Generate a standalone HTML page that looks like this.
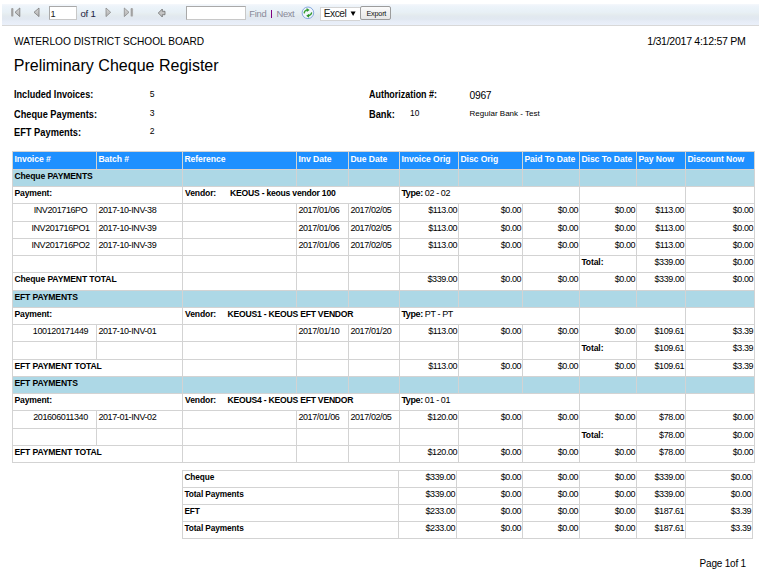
<!DOCTYPE html>
<html><head><meta charset="utf-8">
<style>
html,body{margin:0;padding:0;background:#fff;}
body{width:759px;height:572px;overflow:hidden;position:relative;font-family:"Liberation Sans",sans-serif;color:#000;}
.a{position:absolute;white-space:nowrap;}
.c{position:absolute;box-sizing:border-box;border-right:1px solid #d3d3d3;border-bottom:1px solid #d3d3d3;font-size:9.0px;letter-spacing:-0.4px;line-height:10px;padding-top:1px;white-space:nowrap;overflow:hidden;}
.c.b{font-weight:bold;font-size:8.6px;letter-spacing:-0.05px;}
.c.al{padding-left:1.4px;}
.c.ar{text-align:right;padding-right:0.8px;}
.c.ac{text-align:center;padding-left:12px;}
.vl,.vn{position:absolute;top:1px;font-weight:bold;}
.c.h{padding-top:2px;}
.c.n{padding-top:0.5px;}
.c.b.k{letter-spacing:-0.13px;}
.vl{left:2px;}
.vn{letter-spacing:-0.22px;}
#tb{position:absolute;left:2px;top:4px;right:0;height:21px;border-bottom:1px solid #d8d8d8;
 background:linear-gradient(#f5f8fc 0px,#eef4fa 2px,#eaf2f8 5px,#e8f0f6 8px,#e6edf0 10px,#e2e9ef 12px,#e1e8f1 15px,#e6ecf6 17px,#eaf0fa 21px);}
</style></head><body>
<div id="tb"></div>
<svg style="position:absolute;left:0;top:0" width="400" height="30" viewBox="0 0 400 30">
 <defs>
  <linearGradient id="gb" x1="0" y1="0" x2="1" y2="0"><stop offset="0" stop-color="#b8b8b8"/><stop offset="0.5" stop-color="#9a9a9a"/><stop offset="1" stop-color="#c0c0c0"/></linearGradient>
  <linearGradient id="gt" x1="0" y1="0" x2="0" y2="1"><stop offset="0" stop-color="#d8d8d8"/><stop offset="1" stop-color="#b0b0b0"/></linearGradient>
 </defs>
 <rect x="11" y="8" width="2.6" height="8.6" rx="1.2" fill="url(#gb)"/>
 <path d="M15 12.3 L19.8 8 L19.8 16.6 Z" fill="url(#gt)" stroke="#7a7a7a" stroke-width="0.8" stroke-linejoin="round"/>
 <path d="M34 12.3 L39 8 L39 16.6 Z" fill="url(#gt)" stroke="#7a7a7a" stroke-width="0.8" stroke-linejoin="round"/>
 <path d="M110.7 12.3 L106 8 L106 16.6 Z" fill="url(#gt)" stroke="#8a8a8a" stroke-width="0.8" stroke-linejoin="round"/>
 <path d="M129 12.3 L124.3 8 L124.3 16.6 Z" fill="url(#gt)" stroke="#8a8a8a" stroke-width="0.8" stroke-linejoin="round"/>
 <rect x="130.5" y="8" width="2.6" height="8.6" rx="1.2" fill="url(#gb)"/>
 <path d="M158.3 13 L162.3 9 L162.3 11.3 L165 11.3 L165 14.7 L162.3 14.7 L162.3 17 Z" fill="#c4c4c4" stroke="#6e6e6e" stroke-width="0.8" stroke-linejoin="round"/>
  <circle cx="307.9" cy="12.8" r="5.8" fill="#f2f6fc" stroke="#86a8de" stroke-width="1"/>
 <path d="M302.6 12.6 Q303 13.8 302.5 13.8 L302.5 12.8" fill="none"/>
 <path d="M304.2 12.8 Q304.6 10.4 307.2 9.9" fill="none" stroke="#33a033" stroke-width="1.4" stroke-linecap="round"/>
 <path d="M306.6 7.9 L309.6 9.9 L306.8 11.9 Z" fill="#2e9a2e"/>
 <path d="M311.6 12.9 Q311.2 15.3 308.6 15.8" fill="none" stroke="#2e962e" stroke-width="1.4" stroke-linecap="round"/>
 <path d="M309.2 13.8 L306.2 15.8 L309 17.8 Z" fill="#2a942a"/>
</svg>
<div style="position:absolute;left:49px;top:6px;width:26px;height:12px;background:#fff;border:1px solid #a9a9a9;border-right-color:#c8c8c8;border-bottom-color:#c8c8c8;"></div>
<div class="a" style="left:50.5px;top:8.5px;font-size:9.2px;color:#1a1a1a;">1</div>
<div class="a" style="left:80.5px;top:8.3px;font-size:9.6px;letter-spacing:-0.25px;color:#202040;">of 1</div>
<div style="position:absolute;left:186px;top:6px;width:58px;height:12px;background:#fff;border:1px solid #a9a9a9;border-right-color:#c8c8c8;border-bottom-color:#c8c8c8;"></div>
<div class="a" style="left:249.3px;top:8.3px;font-size:9.4px;letter-spacing:-0.3px;color:#8a8a9a;">Find</div>
<div style="position:absolute;left:271px;top:10px;width:1px;height:8px;background:#800080;"></div>
<div class="a" style="left:276.5px;top:8.3px;font-size:9.4px;letter-spacing:-0.35px;color:#8a8a9a;">Next</div>
<div style="position:absolute;left:320px;top:7px;width:39px;height:11.5px;background:#fff;border:1px solid #d4d4d4;border-right:none;"></div>
<div class="a" style="left:323.8px;top:7.6px;font-size:10.2px;letter-spacing:-0.5px;color:#1a1a1a;">Excel</div>
<svg style="position:absolute;left:350px;top:11px" width="7" height="6"><path d="M0.6 0.6 L5.6 0.6 L3.1 5 Z" fill="#000"/></svg>
<div style="position:absolute;left:360px;top:6px;width:29px;height:12px;border:1px solid #9c9c9c;border-radius:2px;background:linear-gradient(#fbfbfb,#e6e6e6);"></div>
<div class="a" style="left:366.5px;top:8.6px;font-size:7.3px;color:#111;letter-spacing:-0.25px;">Export</div>
<div class="a" style="left:14px;top:36px;font-size:10.15px;">WATERLOO DISTRICT SCHOOL BOARD</div>
<div class="a" style="left:13.7px;top:56.3px;font-size:16.05px;">Preliminary Cheque Register</div>
<div class="a" style="left:647.3px;top:35px;font-size:10.6px;letter-spacing:-0.3px;">1/31/2017 4:12:57 PM</div>
<div class="a" style="left:14.3px;top:89.4px;font-size:10.1px;transform:scaleX(0.9);transform-origin:0 0;font-weight:bold;">Included Invoices:</div>
<div class="a" style="left:14.3px;top:109px;font-size:10.1px;transform:scaleX(0.913);transform-origin:0 0;font-weight:bold;">Cheque Payments:</div>
<div class="a" style="left:14.3px;top:127px;font-size:10.1px;transform:scaleX(0.92);transform-origin:0 0;font-weight:bold;">EFT Payments:</div>
<div class="a" style="left:149.8px;top:89.3px;font-size:8.6px;">5</div>
<div class="a" style="left:149.8px;top:107.9px;font-size:8.6px;">3</div>
<div class="a" style="left:149.8px;top:126px;font-size:8.6px;">2</div>
<div class="a" style="left:369px;top:89.4px;font-size:10.1px;transform:scaleX(0.885);transform-origin:0 0;font-weight:bold;">Authorization #:</div>
<div class="a" style="left:469.6px;top:89.6px;font-size:10.3px;letter-spacing:-0.3px;">0967</div>
<div class="a" style="left:369px;top:109px;font-size:10.1px;transform:scaleX(0.92);transform-origin:0 0;font-weight:bold;">Bank:</div>
<div class="a" style="left:410px;top:108.4px;font-size:8.4px;">10</div>
<div class="a" style="left:469.6px;top:109px;font-size:8px;">Regular Bank - Test</div>
<div style="position:absolute;left:12px;top:151px;width:743px;height:1px;background:#d3d3d3"></div>
<div style="position:absolute;left:12px;top:151px;width:1px;height:312px;background:#d3d3d3"></div>
<div style="position:absolute;left:182px;top:470px;width:571px;height:1px;background:#d3d3d3"></div>
<div style="position:absolute;left:182px;top:470px;width:1px;height:69px;background:#d3d3d3"></div>
<div class="c b h al" style="left:13px;top:152px;width:84px;height:18px;background:#1e90ff;color:#fff;">Invoice #</div>
<div class="c b h al" style="left:97px;top:152px;width:86px;height:18px;background:#1e90ff;color:#fff;">Batch #</div>
<div class="c b h al" style="left:183px;top:152px;width:114px;height:18px;background:#1e90ff;color:#fff;">Reference</div>
<div class="c b h al" style="left:297px;top:152px;width:52px;height:18px;background:#1e90ff;color:#fff;">Inv Date</div>
<div class="c b h al" style="left:349px;top:152px;width:51px;height:18px;background:#1e90ff;color:#fff;">Due Date</div>
<div class="c b h al" style="left:400px;top:152px;width:59px;height:18px;background:#1e90ff;color:#fff;">Invoice Orig</div>
<div class="c b h al" style="left:459px;top:152px;width:64px;height:18px;background:#1e90ff;color:#fff;">Disc Orig</div>
<div class="c b h al" style="left:523px;top:152px;width:57px;height:18px;background:#1e90ff;color:#fff;">Paid To Date</div>
<div class="c b h al" style="left:580px;top:152px;width:57px;height:18px;background:#1e90ff;color:#fff;">Disc To Date</div>
<div class="c b h al" style="left:637px;top:152px;width:49px;height:18px;background:#1e90ff;color:#fff;">Pay Now</div>
<div class="c b h al" style="left:686px;top:152px;width:69px;height:18px;background:#1e90ff;color:#fff;">Discount Now</div>
<div class="c b k al" style="left:13px;top:170px;width:170px;height:17px;background:#add8e6;">Cheque PAYMENTS</div>
<div class="c n al" style="left:183px;top:170px;width:114px;height:17px;background:#add8e6;"></div>
<div class="c n al" style="left:297px;top:170px;width:52px;height:17px;background:#add8e6;"></div>
<div class="c n al" style="left:349px;top:170px;width:51px;height:17px;background:#add8e6;"></div>
<div class="c n al" style="left:400px;top:170px;width:59px;height:17px;background:#add8e6;"></div>
<div class="c n al" style="left:459px;top:170px;width:64px;height:17px;background:#add8e6;"></div>
<div class="c n al" style="left:523px;top:170px;width:57px;height:17px;background:#add8e6;"></div>
<div class="c n al" style="left:580px;top:170px;width:57px;height:17px;background:#add8e6;"></div>
<div class="c n al" style="left:637px;top:170px;width:49px;height:17px;background:#add8e6;"></div>
<div class="c n al" style="left:686px;top:170px;width:69px;height:17px;background:#add8e6;"></div>
<div class="c b k al" style="left:13px;top:187px;width:170px;height:17px;">Payment:</div>
<div class="c b k al" style="left:183px;top:187px;width:217px;height:17px;"><span class="vl">Vendor:</span><span class="vn" style="left:47px">KEOUS - keous vendor 100</span></div>
<div class="c n al" style="left:400px;top:187px;width:180px;height:17px;"><b>Type:</b> 02 - 02</div>
<div class="c n al" style="left:580px;top:187px;width:106px;height:17px;"></div>
<div class="c n al" style="left:686px;top:187px;width:69px;height:17px;"></div>
<div class="c n ac" style="left:13px;top:204px;width:84px;height:18px;">INV201716PO</div>
<div class="c n al" style="left:97px;top:204px;width:86px;height:18px;">2017-10-INV-38</div>
<div class="c n al" style="left:183px;top:204px;width:114px;height:18px;"></div>
<div class="c n al" style="left:297px;top:204px;width:52px;height:18px;">2017/01/06</div>
<div class="c n al" style="left:349px;top:204px;width:51px;height:18px;">2017/02/05</div>
<div class="c n ar" style="left:400px;top:204px;width:59px;height:18px;">$113.00</div>
<div class="c n ar" style="left:459px;top:204px;width:64px;height:18px;">$0.00</div>
<div class="c n ar" style="left:523px;top:204px;width:57px;height:18px;">$0.00</div>
<div class="c n ar" style="left:580px;top:204px;width:57px;height:18px;">$0.00</div>
<div class="c n ar" style="left:637px;top:204px;width:49px;height:18px;">$113.00</div>
<div class="c n ar" style="left:686px;top:204px;width:69px;height:18px;">$0.00</div>
<div class="c n ac" style="left:13px;top:222px;width:84px;height:17px;">INV201716PO1</div>
<div class="c n al" style="left:97px;top:222px;width:86px;height:17px;">2017-10-INV-39</div>
<div class="c n al" style="left:183px;top:222px;width:114px;height:17px;"></div>
<div class="c n al" style="left:297px;top:222px;width:52px;height:17px;">2017/01/06</div>
<div class="c n al" style="left:349px;top:222px;width:51px;height:17px;">2017/02/05</div>
<div class="c n ar" style="left:400px;top:222px;width:59px;height:17px;">$113.00</div>
<div class="c n ar" style="left:459px;top:222px;width:64px;height:17px;">$0.00</div>
<div class="c n ar" style="left:523px;top:222px;width:57px;height:17px;">$0.00</div>
<div class="c n ar" style="left:580px;top:222px;width:57px;height:17px;">$0.00</div>
<div class="c n ar" style="left:637px;top:222px;width:49px;height:17px;">$113.00</div>
<div class="c n ar" style="left:686px;top:222px;width:69px;height:17px;">$0.00</div>
<div class="c n ac" style="left:13px;top:239px;width:84px;height:17px;">INV201716PO2</div>
<div class="c n al" style="left:97px;top:239px;width:86px;height:17px;">2017-10-INV-39</div>
<div class="c n al" style="left:183px;top:239px;width:114px;height:17px;"></div>
<div class="c n al" style="left:297px;top:239px;width:52px;height:17px;">2017/01/06</div>
<div class="c n al" style="left:349px;top:239px;width:51px;height:17px;">2017/02/05</div>
<div class="c n ar" style="left:400px;top:239px;width:59px;height:17px;">$113.00</div>
<div class="c n ar" style="left:459px;top:239px;width:64px;height:17px;">$0.00</div>
<div class="c n ar" style="left:523px;top:239px;width:57px;height:17px;">$0.00</div>
<div class="c n ar" style="left:580px;top:239px;width:57px;height:17px;">$0.00</div>
<div class="c n ar" style="left:637px;top:239px;width:49px;height:17px;">$113.00</div>
<div class="c n ar" style="left:686px;top:239px;width:69px;height:17px;">$0.00</div>
<div class="c n al" style="left:13px;top:256px;width:84px;height:17px;"></div>
<div class="c n al" style="left:97px;top:256px;width:86px;height:17px;"></div>
<div class="c n al" style="left:183px;top:256px;width:114px;height:17px;"></div>
<div class="c n al" style="left:297px;top:256px;width:52px;height:17px;"></div>
<div class="c n al" style="left:349px;top:256px;width:51px;height:17px;"></div>
<div class="c n al" style="left:400px;top:256px;width:59px;height:17px;"></div>
<div class="c n al" style="left:459px;top:256px;width:64px;height:17px;"></div>
<div class="c n al" style="left:523px;top:256px;width:57px;height:17px;"></div>
<div class="c b k al" style="left:580px;top:256px;width:57px;height:17px;">Total:</div>
<div class="c n ar" style="left:637px;top:256px;width:49px;height:17px;">$339.00</div>
<div class="c n ar" style="left:686px;top:256px;width:69px;height:17px;">$0.00</div>
<div class="c b k al" style="left:13px;top:273px;width:170px;height:18px;">Cheque PAYMENT TOTAL</div>
<div class="c n al" style="left:183px;top:273px;width:114px;height:18px;"></div>
<div class="c n al" style="left:297px;top:273px;width:52px;height:18px;"></div>
<div class="c n al" style="left:349px;top:273px;width:51px;height:18px;"></div>
<div class="c n ar" style="left:400px;top:273px;width:59px;height:18px;">$339.00</div>
<div class="c n ar" style="left:459px;top:273px;width:64px;height:18px;">$0.00</div>
<div class="c n ar" style="left:523px;top:273px;width:57px;height:18px;">$0.00</div>
<div class="c n ar" style="left:580px;top:273px;width:57px;height:18px;">$0.00</div>
<div class="c n ar" style="left:637px;top:273px;width:49px;height:18px;">$339.00</div>
<div class="c n ar" style="left:686px;top:273px;width:69px;height:18px;">$0.00</div>
<div class="c b k al" style="left:13px;top:291px;width:170px;height:17px;background:#add8e6;">EFT PAYMENTS</div>
<div class="c n al" style="left:183px;top:291px;width:114px;height:17px;background:#add8e6;"></div>
<div class="c n al" style="left:297px;top:291px;width:52px;height:17px;background:#add8e6;"></div>
<div class="c n al" style="left:349px;top:291px;width:51px;height:17px;background:#add8e6;"></div>
<div class="c n al" style="left:400px;top:291px;width:59px;height:17px;background:#add8e6;"></div>
<div class="c n al" style="left:459px;top:291px;width:64px;height:17px;background:#add8e6;"></div>
<div class="c n al" style="left:523px;top:291px;width:57px;height:17px;background:#add8e6;"></div>
<div class="c n al" style="left:580px;top:291px;width:57px;height:17px;background:#add8e6;"></div>
<div class="c n al" style="left:637px;top:291px;width:49px;height:17px;background:#add8e6;"></div>
<div class="c n al" style="left:686px;top:291px;width:69px;height:17px;background:#add8e6;"></div>
<div class="c b k al" style="left:13px;top:308px;width:170px;height:17px;">Payment:</div>
<div class="c b k al" style="left:183px;top:308px;width:217px;height:17px;"><span class="vl">Vendor:</span><span class="vn" style="left:44.5px">KEOUS1 - KEOUS EFT VENDOR</span></div>
<div class="c n al" style="left:400px;top:308px;width:180px;height:17px;"><b>Type:</b> PT - PT</div>
<div class="c n al" style="left:580px;top:308px;width:106px;height:17px;"></div>
<div class="c n al" style="left:686px;top:308px;width:69px;height:17px;"></div>
<div class="c n ac" style="left:13px;top:325px;width:84px;height:17px;">100120171449</div>
<div class="c n al" style="left:97px;top:325px;width:86px;height:17px;">2017-10-INV-01</div>
<div class="c n al" style="left:183px;top:325px;width:114px;height:17px;"></div>
<div class="c n al" style="left:297px;top:325px;width:52px;height:17px;">2017/01/10</div>
<div class="c n al" style="left:349px;top:325px;width:51px;height:17px;">2017/01/20</div>
<div class="c n ar" style="left:400px;top:325px;width:59px;height:17px;">$113.00</div>
<div class="c n ar" style="left:459px;top:325px;width:64px;height:17px;">$0.00</div>
<div class="c n ar" style="left:523px;top:325px;width:57px;height:17px;">$0.00</div>
<div class="c n ar" style="left:580px;top:325px;width:57px;height:17px;">$0.00</div>
<div class="c n ar" style="left:637px;top:325px;width:49px;height:17px;">$109.61</div>
<div class="c n ar" style="left:686px;top:325px;width:69px;height:17px;">$3.39</div>
<div class="c n al" style="left:13px;top:342px;width:84px;height:18px;"></div>
<div class="c n al" style="left:97px;top:342px;width:86px;height:18px;"></div>
<div class="c n al" style="left:183px;top:342px;width:114px;height:18px;"></div>
<div class="c n al" style="left:297px;top:342px;width:52px;height:18px;"></div>
<div class="c n al" style="left:349px;top:342px;width:51px;height:18px;"></div>
<div class="c n al" style="left:400px;top:342px;width:59px;height:18px;"></div>
<div class="c n al" style="left:459px;top:342px;width:64px;height:18px;"></div>
<div class="c n al" style="left:523px;top:342px;width:57px;height:18px;"></div>
<div class="c b k al" style="left:580px;top:342px;width:57px;height:18px;">Total:</div>
<div class="c n ar" style="left:637px;top:342px;width:49px;height:18px;">$109.61</div>
<div class="c n ar" style="left:686px;top:342px;width:69px;height:18px;">$3.39</div>
<div class="c b k al" style="left:13px;top:360px;width:170px;height:17px;">EFT PAYMENT TOTAL</div>
<div class="c n al" style="left:183px;top:360px;width:114px;height:17px;"></div>
<div class="c n al" style="left:297px;top:360px;width:52px;height:17px;"></div>
<div class="c n al" style="left:349px;top:360px;width:51px;height:17px;"></div>
<div class="c n ar" style="left:400px;top:360px;width:59px;height:17px;">$113.00</div>
<div class="c n ar" style="left:459px;top:360px;width:64px;height:17px;">$0.00</div>
<div class="c n ar" style="left:523px;top:360px;width:57px;height:17px;">$0.00</div>
<div class="c n ar" style="left:580px;top:360px;width:57px;height:17px;">$0.00</div>
<div class="c n ar" style="left:637px;top:360px;width:49px;height:17px;">$109.61</div>
<div class="c n ar" style="left:686px;top:360px;width:69px;height:17px;">$3.39</div>
<div class="c b k al" style="left:13px;top:377px;width:170px;height:17px;background:#add8e6;">EFT PAYMENTS</div>
<div class="c n al" style="left:183px;top:377px;width:114px;height:17px;background:#add8e6;"></div>
<div class="c n al" style="left:297px;top:377px;width:52px;height:17px;background:#add8e6;"></div>
<div class="c n al" style="left:349px;top:377px;width:51px;height:17px;background:#add8e6;"></div>
<div class="c n al" style="left:400px;top:377px;width:59px;height:17px;background:#add8e6;"></div>
<div class="c n al" style="left:459px;top:377px;width:64px;height:17px;background:#add8e6;"></div>
<div class="c n al" style="left:523px;top:377px;width:57px;height:17px;background:#add8e6;"></div>
<div class="c n al" style="left:580px;top:377px;width:57px;height:17px;background:#add8e6;"></div>
<div class="c n al" style="left:637px;top:377px;width:49px;height:17px;background:#add8e6;"></div>
<div class="c n al" style="left:686px;top:377px;width:69px;height:17px;background:#add8e6;"></div>
<div class="c b k al" style="left:13px;top:394px;width:170px;height:17px;">Payment:</div>
<div class="c b k al" style="left:183px;top:394px;width:217px;height:17px;"><span class="vl">Vendor:</span><span class="vn" style="left:44.5px">KEOUS4 - KEOUS EFT VENDOR</span></div>
<div class="c n al" style="left:400px;top:394px;width:180px;height:17px;"><b>Type:</b> 01 - 01</div>
<div class="c n al" style="left:580px;top:394px;width:106px;height:17px;"></div>
<div class="c n al" style="left:686px;top:394px;width:69px;height:17px;"></div>
<div class="c n ac" style="left:13px;top:411px;width:84px;height:18px;">201606011340</div>
<div class="c n al" style="left:97px;top:411px;width:86px;height:18px;">2017-01-INV-02</div>
<div class="c n al" style="left:183px;top:411px;width:114px;height:18px;"></div>
<div class="c n al" style="left:297px;top:411px;width:52px;height:18px;">2017/01/06</div>
<div class="c n al" style="left:349px;top:411px;width:51px;height:18px;">2017/02/05</div>
<div class="c n ar" style="left:400px;top:411px;width:59px;height:18px;">$120.00</div>
<div class="c n ar" style="left:459px;top:411px;width:64px;height:18px;">$0.00</div>
<div class="c n ar" style="left:523px;top:411px;width:57px;height:18px;">$0.00</div>
<div class="c n ar" style="left:580px;top:411px;width:57px;height:18px;">$0.00</div>
<div class="c n ar" style="left:637px;top:411px;width:49px;height:18px;">$78.00</div>
<div class="c n ar" style="left:686px;top:411px;width:69px;height:18px;">$0.00</div>
<div class="c n al" style="left:13px;top:429px;width:84px;height:17px;"></div>
<div class="c n al" style="left:97px;top:429px;width:86px;height:17px;"></div>
<div class="c n al" style="left:183px;top:429px;width:114px;height:17px;"></div>
<div class="c n al" style="left:297px;top:429px;width:52px;height:17px;"></div>
<div class="c n al" style="left:349px;top:429px;width:51px;height:17px;"></div>
<div class="c n al" style="left:400px;top:429px;width:59px;height:17px;"></div>
<div class="c n al" style="left:459px;top:429px;width:64px;height:17px;"></div>
<div class="c n al" style="left:523px;top:429px;width:57px;height:17px;"></div>
<div class="c b k al" style="left:580px;top:429px;width:57px;height:17px;">Total:</div>
<div class="c n ar" style="left:637px;top:429px;width:49px;height:17px;">$78.00</div>
<div class="c n ar" style="left:686px;top:429px;width:69px;height:17px;">$0.00</div>
<div class="c b k al" style="left:13px;top:446px;width:170px;height:17px;">EFT PAYMENT TOTAL</div>
<div class="c n al" style="left:183px;top:446px;width:114px;height:17px;"></div>
<div class="c n al" style="left:297px;top:446px;width:52px;height:17px;"></div>
<div class="c n al" style="left:349px;top:446px;width:51px;height:17px;"></div>
<div class="c n ar" style="left:400px;top:446px;width:59px;height:17px;">$120.00</div>
<div class="c n ar" style="left:459px;top:446px;width:64px;height:17px;">$0.00</div>
<div class="c n ar" style="left:523px;top:446px;width:57px;height:17px;">$0.00</div>
<div class="c n ar" style="left:580px;top:446px;width:57px;height:17px;">$0.00</div>
<div class="c n ar" style="left:637px;top:446px;width:49px;height:17px;">$78.00</div>
<div class="c n ar" style="left:686px;top:446px;width:69px;height:17px;">$0.00</div>
<div class="c b k al" style="left:183px;top:471px;width:216px;height:17px;"><span style="font-size:8.3px;letter-spacing:-0.1px">Cheque</span></div>
<div class="c n ar" style="left:399px;top:471px;width:58px;height:17px;">$339.00</div>
<div class="c n ar" style="left:457px;top:471px;width:66px;height:17px;">$0.00</div>
<div class="c n ar" style="left:523px;top:471px;width:57px;height:17px;">$0.00</div>
<div class="c n ar" style="left:580px;top:471px;width:57px;height:17px;">$0.00</div>
<div class="c n ar" style="left:637px;top:471px;width:49px;height:17px;">$339.00</div>
<div class="c n ar" style="left:686px;top:471px;width:67px;height:17px;">$0.00</div>
<div class="c b k al" style="left:183px;top:488px;width:216px;height:17px;"><span style="font-size:8.3px;letter-spacing:-0.1px">Total Payments</span></div>
<div class="c n ar" style="left:399px;top:488px;width:58px;height:17px;">$339.00</div>
<div class="c n ar" style="left:457px;top:488px;width:66px;height:17px;">$0.00</div>
<div class="c n ar" style="left:523px;top:488px;width:57px;height:17px;">$0.00</div>
<div class="c n ar" style="left:580px;top:488px;width:57px;height:17px;">$0.00</div>
<div class="c n ar" style="left:637px;top:488px;width:49px;height:17px;">$339.00</div>
<div class="c n ar" style="left:686px;top:488px;width:67px;height:17px;">$0.00</div>
<div class="c b k al" style="left:183px;top:505px;width:216px;height:17px;"><span style="font-size:8.3px;letter-spacing:-0.1px">EFT</span></div>
<div class="c n ar" style="left:399px;top:505px;width:58px;height:17px;">$233.00</div>
<div class="c n ar" style="left:457px;top:505px;width:66px;height:17px;">$0.00</div>
<div class="c n ar" style="left:523px;top:505px;width:57px;height:17px;">$0.00</div>
<div class="c n ar" style="left:580px;top:505px;width:57px;height:17px;">$0.00</div>
<div class="c n ar" style="left:637px;top:505px;width:49px;height:17px;">$187.61</div>
<div class="c n ar" style="left:686px;top:505px;width:67px;height:17px;">$3.39</div>
<div class="c b k al" style="left:183px;top:522px;width:216px;height:17px;"><span style="font-size:8.3px;letter-spacing:-0.1px">Total Payments</span></div>
<div class="c n ar" style="left:399px;top:522px;width:58px;height:17px;">$233.00</div>
<div class="c n ar" style="left:457px;top:522px;width:66px;height:17px;">$0.00</div>
<div class="c n ar" style="left:523px;top:522px;width:57px;height:17px;">$0.00</div>
<div class="c n ar" style="left:580px;top:522px;width:57px;height:17px;">$0.00</div>
<div class="c n ar" style="left:637px;top:522px;width:49px;height:17px;">$187.61</div>
<div class="c n ar" style="left:686px;top:522px;width:67px;height:17px;">$3.39</div>
<div class="a" style="left:699.6px;top:557.8px;font-size:10px;letter-spacing:-0.2px;">Page 1of 1</div>
</body></html>
